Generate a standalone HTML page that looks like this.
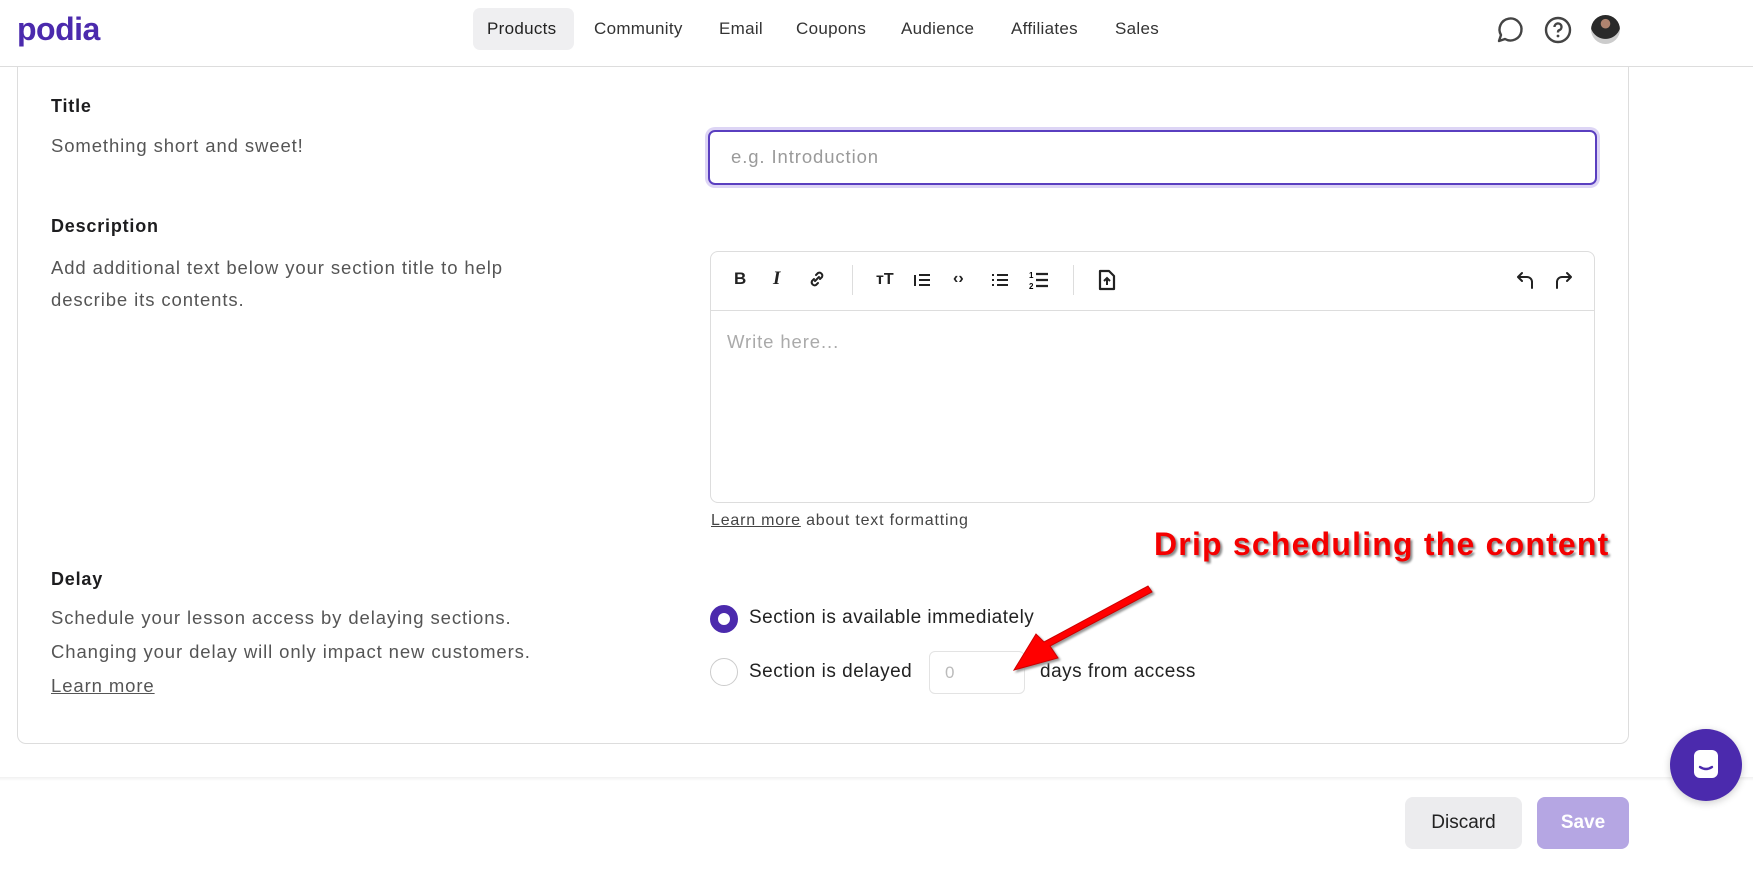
<!DOCTYPE html>
<html><head><meta charset="utf-8"><style>
*{box-sizing:border-box;margin:0;padding:0}
body{width:1753px;height:877px;overflow:hidden;background:#fff;font-family:"Liberation Sans",sans-serif;color:#222;position:relative}
.a{position:absolute;white-space:nowrap}
.nav{font-size:17px;color:#333;top:19px;letter-spacing:0.3px}
.lbl{font-size:18px;font-weight:bold;color:#1d1d1f;letter-spacing:0.8px}
.txt{font-size:18.5px;color:#555;letter-spacing:0.9px}
.ic{position:absolute;top:269px;font-size:17px;color:#222;font-weight:bold}
.rl{font-size:19px;color:#222;letter-spacing:0.5px}
</style></head><body>
<div class="a" style="left:17px;top:11px;font-size:32px;font-weight:bold;color:#4b2aad;letter-spacing:-0.5px">podia</div>
<div class="a" style="left:473px;top:8px;width:101px;height:42px;background:#efeff1;border-radius:7px"></div>
<div class="a nav" style="left:487px;color:#222">Products</div>
<div class="a nav" style="left:594px">Community</div>
<div class="a nav" style="left:719px">Email</div>
<div class="a nav" style="left:796px">Coupons</div>
<div class="a nav" style="left:901px">Audience</div>
<div class="a nav" style="left:1011px">Affiliates</div>
<div class="a nav" style="left:1115px">Sales</div>
<svg class="a" style="left:1493px;top:14px" width="32" height="32" viewBox="0 0 32 32"><path d="M6 27 L8 21 A11 11 0 1 1 12 25 Z" fill="none" stroke="#444" stroke-width="2.4" stroke-linejoin="round"/></svg>
<svg class="a" style="left:1543px;top:15px" width="30" height="30" viewBox="0 0 30 30"><circle cx="15" cy="15" r="12" fill="none" stroke="#444" stroke-width="2.4"/><path d="M11.5 12a3.5 3.5 0 1 1 4.5 3.3c-1 .4-1 1-1 2.2" fill="none" stroke="#444" stroke-width="2.4"/><circle cx="15" cy="21" r="1.4" fill="#444"/></svg>
<div class="a" style="left:1591px;top:15px;width:29px;height:29px;border-radius:50%;background:radial-gradient(circle at 50% 30%,#b08470 0 18%,#2a2a2a 20% 60%,#ccc 62%)"></div>
<div class="a" style="left:0;top:66px;width:1753px;height:1px;background:#ddd"></div>
<div class="a" style="left:17px;top:67px;width:1612px;height:677px;border:1px solid #ddd;border-top:none;border-radius:0 0 9px 9px"></div>

<div class="a lbl" style="left:51px;top:96px">Title</div>
<div class="a txt" style="left:51px;top:135px">Something short and sweet!</div>
<div class="a" style="left:708px;top:130px;width:889px;height:55px;border:2px solid #5a3fc0;border-radius:7px;box-shadow:0 0 0 3px #ddd5f5"></div>
<div class="a txt" style="left:731px;top:146px;color:#9a9a9a">e.g. Introduction</div>

<div class="a lbl" style="left:51px;top:216px">Description</div>
<div class="a txt" style="left:51px;top:252px;line-height:32px">Add additional text below your section title to help<br>describe its contents.</div>
<div class="a" style="left:710px;top:251px;width:885px;height:252px;border:1px solid #ddd;border-radius:8px"></div>
<div class="a" style="left:711px;top:310px;width:883px;height:1px;background:#ddd"></div>
<div class="ic" style="left:734px">B</div>
<div class="ic" style="left:773px;font-style:italic;font-family:'Liberation Serif',serif;font-size:19px;top:268px">I</div>
<svg class="a" style="left:808px;top:270px" width="18" height="18" viewBox="0 0 18 18"><path d="M8 5l2-2a3 3 0 0 1 4 4l-2 2M10 13l-2 2a3 3 0 0 1-4-4l2-2M7 11l4-4" fill="none" stroke="#222" stroke-width="2" stroke-linecap="round"/></svg>
<div class="a" style="left:852px;top:265px;width:1px;height:30px;background:#ddd"></div>
<div class="ic" style="left:876px;font-size:16px;top:271px">тT</div>
<svg class="a" style="left:913px;top:272px" width="18" height="16" viewBox="0 0 18 16"><path d="M2 3v11M6 3h11M6 8h11M6 13h11" stroke="#222" stroke-width="2"/></svg>
<div class="ic" style="left:953px;font-size:16px;top:270px">‹›</div>
<svg class="a" style="left:991px;top:272px" width="18" height="16" viewBox="0 0 18 16"><path d="M1 3h2M1 8h2M1 13h2M6 3h11M6 8h11M6 13h11" stroke="#222" stroke-width="2"/></svg>
<svg class="a" style="left:1029px;top:270px" width="20" height="20" viewBox="0 0 20 20"><text x="0" y="8" font-size="8" font-family="Liberation Sans" font-weight="bold">1</text><text x="0" y="19" font-size="8" font-family="Liberation Sans" font-weight="bold">2</text><path d="M7 4h12M7 10h12M7 16h12" stroke="#222" stroke-width="2.2"/></svg>
<div class="a" style="left:1073px;top:265px;width:1px;height:30px;background:#ddd"></div>
<svg class="a" style="left:1098px;top:269px" width="18" height="22" viewBox="0 0 18 22"><path d="M2 2h9l5 5v13H2z" fill="none" stroke="#222" stroke-width="2.2" stroke-linejoin="round"/><path d="M9 16V9M6 12l3-3 3 3" fill="none" stroke="#222" stroke-width="2"/></svg>
<svg class="a" style="left:1516px;top:270px" width="20" height="20" viewBox="0 0 20 20"><path d="M6 3L2 7l4 4M2 7h9a5 5 0 0 1 5 5v6" fill="none" stroke="#222" stroke-width="2" stroke-linecap="round" stroke-linejoin="round"/></svg>
<svg class="a" style="left:1553px;top:270px" width="20" height="20" viewBox="0 0 20 20"><path d="M14 3l4 4-4 4M18 7H9a5 5 0 0 0-5 5v6" fill="none" stroke="#222" stroke-width="2" stroke-linecap="round" stroke-linejoin="round"/></svg>
<div class="a txt" style="left:727px;top:331px;color:#aaa">Write here...</div>
<div class="a" style="left:711px;top:512px;font-size:16px;color:#444;letter-spacing:0.8px"><span style="text-decoration:underline">Learn more</span> about text formatting</div>

<div class="a" style="left:1154px;top:526px;font-size:32px;font-weight:bold;color:#f40000;letter-spacing:1.2px;text-shadow:2px 2px 2px #888">Drip scheduling the content</div>

<div class="a lbl" style="left:51px;top:569px">Delay</div>
<div class="a txt" style="left:51px;top:601px;line-height:34px">Schedule your lesson access by delaying sections.<br>Changing your delay will only impact new customers.<br><span style="text-decoration:underline">Learn more</span></div>

<div class="a" style="left:710px;top:605px;width:28px;height:28px;border-radius:50%;border:8px solid #4b2aad;background:#fff"></div>
<div class="a rl" style="left:749px;top:607px">Section is available immediately</div>
<div class="a" style="left:710px;top:658px;width:28px;height:28px;border-radius:50%;border:1px solid #ccc"></div>
<div class="a rl" style="left:749px;top:661px">Section is delayed</div>
<div class="a" style="left:929px;top:651px;width:96px;height:43px;border:1px solid #e3e3e3;border-radius:6px"></div>
<div class="a" style="left:945px;top:663px;font-size:17px;color:#bbb">0</div>
<div class="a rl" style="left:1040px;top:661px">days from access</div>
<svg class="a" style="left:1000px;top:580px" width="160" height="100" viewBox="0 0 160 100"><path d="M148 6 L152 12 L50 66 L58 78 L14 90 L36 54 L44 62 Z" fill="#f00" stroke="#c00" stroke-width="1" style="filter:drop-shadow(2px 2px 1px #999)"/></svg>

<div class="a" style="left:0;top:777px;width:1753px;height:4px;background:linear-gradient(#f0f0f0,#fff)"></div>
<div class="a" style="left:1405px;top:797px;width:117px;height:52px;background:#ececee;border-radius:8px;font-size:19px;color:#222;text-align:center;line-height:52px">Discard</div>
<div class="a" style="left:1537px;top:797px;width:92px;height:52px;background:#b5a6e3;border-radius:8px;font-size:19px;font-weight:bold;color:#fff;text-align:center;line-height:52px">Save</div>
<div class="a" style="left:1670px;top:729px;width:72px;height:72px;border-radius:50%;background:#4b2aad;box-shadow:0 2px 8px rgba(0,0,0,.2)"></div>
<svg class="a" style="left:1690px;top:747px" width="32" height="36" viewBox="0 0 32 36"><rect x="4" y="3" width="24" height="28" rx="6" fill="#fff"/><path d="M10 20q6 4 12 0" fill="none" stroke="#4b2aad" stroke-width="2.4" stroke-linecap="round"/></svg>
</body></html>
